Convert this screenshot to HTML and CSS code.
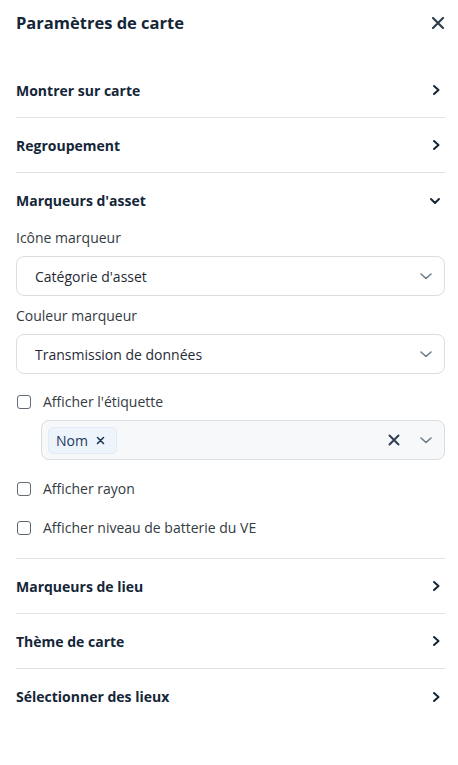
FILE: index.html
```html
<!DOCTYPE html>
<html lang="fr">
<head>
<meta charset="utf-8">
<link rel="stylesheet" href="styles.css">
</head>
<body>
<div class="panel">
  <div class="header">
    <h1 class="title">Paramètres de carte</h1>
    <svg class="close" width="14" height="14" viewBox="0 0 14 14"><path d="M2 2L12 12M12 2L2 12" stroke="#2f3f4f" stroke-width="2.2" stroke-linecap="round"/></svg>
  </div>

  <div class="row">
    <span class="row-title">Montrer sur carte</span>
    <svg class="chev" width="10" height="12" viewBox="0 0 10 12"><path d="M3 2L7.5 6L3 10" fill="none" stroke="#142638" stroke-width="2" stroke-linecap="round" stroke-linejoin="round"/></svg>
  </div>
  <div class="row">
    <span class="row-title">Regroupement</span>
    <svg class="chev" width="10" height="12" viewBox="0 0 10 12"><path d="M3 2L7.5 6L3 10" fill="none" stroke="#142638" stroke-width="2" stroke-linecap="round" stroke-linejoin="round"/></svg>
  </div>

  <div class="section">
    <div class="row open">
      <span class="row-title">Marqueurs d'asset</span>
      <svg class="chev" width="12" height="10" viewBox="0 0 12 10"><path d="M2 3L6 7L10 3" fill="none" stroke="#142638" stroke-width="2" stroke-linecap="round" stroke-linejoin="round"/></svg>
    </div>
    <div class="body">
      <div class="label">Icône marqueur</div>
      <div class="select">
        <span>Catégorie d'asset</span>
        <svg class="sel-chev" width="14" height="10" viewBox="0 0 14 10"><path d="M2 3L7 7.5L12 3" fill="none" stroke="#6b7c8c" stroke-width="1.6" stroke-linecap="round" stroke-linejoin="round"/></svg>
      </div>
      <div class="label second">Couleur marqueur</div>
      <div class="select">
        <span>Transmission de données</span>
        <svg class="sel-chev" width="14" height="10" viewBox="0 0 14 10"><path d="M2 3L7 7.5L12 3" fill="none" stroke="#6b7c8c" stroke-width="1.6" stroke-linecap="round" stroke-linejoin="round"/></svg>
      </div>

      <label class="check first-check"><span class="box"></span><span>Afficher l'étiquette</span></label>
      <div class="multi">
        <span class="chip">Nom <svg width="9" height="9" viewBox="0 0 9 9"><path d="M1.5 1.5L7.5 7.5M7.5 1.5L1.5 7.5" stroke="#1d3a5c" stroke-width="1.6" stroke-linecap="round"/></svg></span>
        <span class="spacer"></span>
        <svg class="clear" width="12" height="12" viewBox="0 0 12 12"><path d="M1.5 1.5L10.5 10.5M10.5 1.5L1.5 10.5" stroke="#2f3f4f" stroke-width="2" stroke-linecap="round"/></svg>
        <svg class="sel-chev" width="14" height="10" viewBox="0 0 14 10"><path d="M2 3L7 7.5L12 3" fill="none" stroke="#6b7c8c" stroke-width="1.6" stroke-linecap="round" stroke-linejoin="round"/></svg>
      </div>
      <label class="check"><span class="box"></span><span>Afficher rayon</span></label>
      <label class="check"><span class="box"></span><span>Afficher niveau de batterie du VE</span></label>
    </div>
  </div>

  <div class="row">
    <span class="row-title">Marqueurs de lieu</span>
    <svg class="chev" width="10" height="12" viewBox="0 0 10 12"><path d="M3 2L7.5 6L3 10" fill="none" stroke="#142638" stroke-width="2" stroke-linecap="round" stroke-linejoin="round"/></svg>
  </div>
  <div class="row">
    <span class="row-title">Thème de carte</span>
    <svg class="chev" width="10" height="12" viewBox="0 0 10 12"><path d="M3 2L7.5 6L3 10" fill="none" stroke="#142638" stroke-width="2" stroke-linecap="round" stroke-linejoin="round"/></svg>
  </div>
  <div class="row last">
    <span class="row-title">Sélectionner des lieux</span>
    <svg class="chev" width="10" height="12" viewBox="0 0 10 12"><path d="M3 2L7.5 6L3 10" fill="none" stroke="#142638" stroke-width="2" stroke-linecap="round" stroke-linejoin="round"/></svg>
  </div>
</div>
</body>
</html>
```

FILE: styles.css
```css
* { box-sizing: border-box; }
html, body { margin: 0; padding: 0; background: #ffffff; }
body {
  font-family: "Open Sans", "Noto Sans", sans-serif;
  color: #142638;
  width: 458px;
}
.panel {
  padding: 0 13px 0 16px;
}
.header {
  height: 63px;
  display: flex;
  align-items: flex-start;
  justify-content: space-between;
  padding-top: 11px;
}
.title {
  margin: 0;
  font-size: 16.5px;
  font-weight: 700;
  line-height: 24px;
  color: #142638;
}
.close {
  margin-top: 5px;
  margin-right: 0;
}
.row {
  height: 55px;
  display: flex;
  align-items: center;
  justify-content: space-between;
  border-bottom: 1px solid #dde2e7;
}
.row.open { border-bottom: none; }
.row.last { border-bottom: none; }
.row-title {
  font-size: 14px;
  font-weight: 700;
  color: #142638;
}
.chev { margin-right: 4px; }
.section {
  border-bottom: 1px solid #dde2e7;
  padding-bottom: 20px;
}
.label {
  font-size: 14px;
  line-height: 20px;
  color: #333b43;
  margin-top: 0;
}
.label.second { margin-top: 10px; }
.select {
  margin-top: 8px;
  height: 40px;
  border: 1px solid #d9dee3;
  border-radius: 8px;
  display: flex;
  align-items: center;
  justify-content: space-between;
  padding: 0 11px 0 18px;
  font-size: 14px;
  color: #1f2a35;
}
.check {
  display: flex;
  align-items: center;
  gap: 12px;
  font-size: 14px;
  line-height: 20px;
  color: #333b43;
  margin-top: 19px;
  padding-left: 1px;
}
.check.first-check { margin-top: 18px; }
.box {
  width: 14px;
  height: 14px;
  border: 1.5px solid #626a73;
  border-radius: 3px;
  flex: none;
}
.multi {
  margin: 8px 0 0 25px;
  height: 40px;
  border: 1px solid #d9dee3;
  border-radius: 8px;
  background: #f6f8fa;
  display: flex;
  align-items: center;
  padding: 0 11px 0 6px;
}
.chip {
  display: flex;
  align-items: center;
  gap: 8px;
  height: 27px;
  padding: 0 11px 0 7px;
  background: #eef4fb;
  border: 1px solid #e2ebf5;
  border-radius: 5px;
  font-size: 14px;
  color: #1d3a5c;
}
.spacer { flex: 1; }
.clear { margin-right: 19px; }
```
